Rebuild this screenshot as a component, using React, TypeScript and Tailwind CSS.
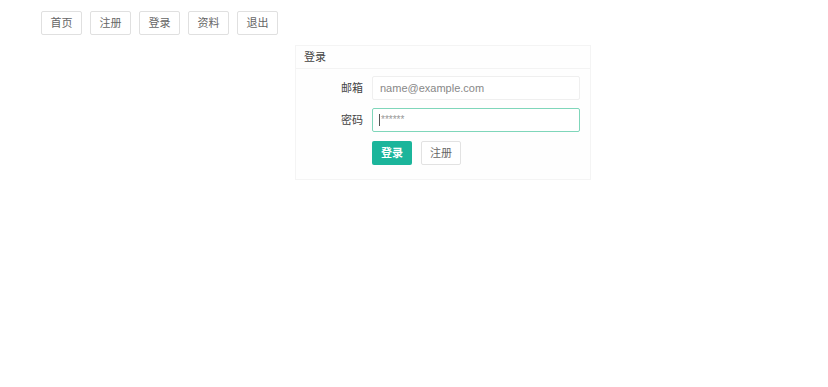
import React from "react";

const font = { fontFamily: '"Liberation Sans", "Noto Sans CJK SC", sans-serif' };

export default function App() {
  const nav = ["首页", "注册", "登录", "资料", "退出"];
  return (
    <div className="min-h-[387px] w-[828px] bg-white text-[12px] text-[#333]" style={font}>
      <div className="flex gap-[8px] pl-[41px] pt-[11px]">
        {nav.map((n) => (
          <button
            key={n}
            className="flex h-[24px] w-[41px] items-center justify-center rounded-[2px] border border-[#e0e0e0] bg-white text-[11px] text-[#666]"
          >
            {n}
          </button>
        ))}
      </div>
      <div className="pl-[295px] pt-[10px]">
        <div className="w-[296px] border border-[#f4f4f4] bg-[#fefefe]">
          <div className="flex h-[23px] items-center border-b border-[#f3f3f3] pl-[8px] text-[11px] text-[#444]">
            登录
          </div>
          <div className="flex flex-col gap-[8px] pb-[14px] pt-[7px]">
            <div className="flex items-center">
              <div className="w-[67px] text-right text-[11px] text-[#444]">邮箱</div>
              <div className="ml-[9px] flex h-[24px] w-[208px] items-center rounded-[2px] border border-[#efefef] bg-white pl-[7px] text-[11px] text-[#888]">
                name@example.com
              </div>
            </div>
            <div className="flex items-center">
              <div className="w-[67px] text-right text-[11px] text-[#444]">密码</div>
              <div className="ml-[9px] flex h-[24px] w-[208px] items-center rounded-[2px] border border-[#7fd6ba] bg-white pl-[6px] text-[10px] text-[#999]">
                <span className="mr-[1px] inline-block h-[12px] w-[1px] bg-[#555]" />
                <span className="leading-none">******</span>
              </div>
            </div>
            <div className="mt-[1px] flex items-center gap-[9px] pl-[76px]">
              <button className="flex h-[24px] w-[40px] items-center justify-center rounded-[2px] bg-[#1bb59b] text-[11px] font-bold text-white">
                登录
              </button>
              <button className="flex h-[24px] w-[40px] items-center justify-center rounded-[2px] border border-[#e2e2e2] bg-white text-[11px] text-[#666]">
                注册
              </button>
            </div>
          </div>
        </div>
      </div>
    </div>
  );
}
